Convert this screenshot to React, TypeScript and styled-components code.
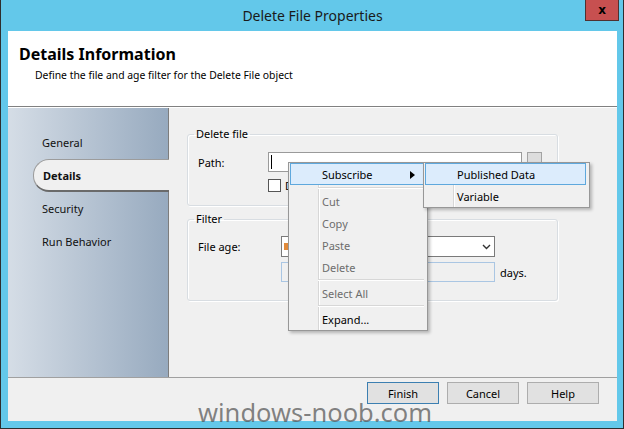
import React from 'react';
import styled, { createGlobalStyle } from 'styled-components';

const GlobalStyle = createGlobalStyle`
  html, body {
    margin: 0;
    padding: 0;
    overflow: hidden;
    background: #ffffff;
  }
`;

const Window = styled.div`
  position: relative;
  width: 624px;
  height: 429px;
  box-sizing: border-box;
  background: #63c8ea;
  border: 1px solid #2e2e2e;
  border-top: none;
  padding: 0 6px 7px 7px;
  display: flex;
  flex-direction: column;
  font-family: "Noto Sans", "Open Sans", sans-serif;
  font-size: 11px;
  color: #1a1a1a;
`;

const TitleBar = styled.div`
  height: 31px;
  display: grid;
  grid-template-columns: 1fr auto 1fr;
  align-items: start;
`;

const Title = styled.div`
  grid-column: 2;
  line-height: 31px;
  font-size: 14px;
  color: #1a1a1a;
`;

const CloseButton = styled.div`
  grid-column: 3;
  justify-self: end;
  margin-right: -2px;
  width: 34px;
  height: 21px;
  box-sizing: border-box;
  background: #c75050;
  border: 1px solid #4f3131;
  border-top: none;
  display: flex;
  align-items: center;
  justify-content: center;
  font-family: "DejaVu Sans", sans-serif;
  font-weight: bold;
  font-size: 12px;
  line-height: 1;
  color: #000;
`;

const Client = styled.div`
  flex: 1;
  background: #ffffff;
  display: flex;
  flex-direction: column;
`;

const Header = styled.div`
  height: 76px;
  box-sizing: border-box;
  border-bottom: 1px solid #808080;
  padding: 12px 0 0 11px;
`;

const HeaderTitle = styled.div`
  font-size: 16px;
  font-weight: bold;
  line-height: 22px;
  color: #000;
`;

const HeaderText = styled.div`
  margin: 0 0 0 16px;
  font-size: 10.4px;
  line-height: 20px;
  color: #000;
`;

const Body = styled.div`
  height: 269px;
  display: flex;
  margin-top: 1px;
  border-bottom: 1px solid #a0a0a0;
`;

const Sidebar = styled.div`
  width: 160px;
  border-right: 1px solid #7d7d7d;
  background: linear-gradient(to right, #d5dde6, #97aabf);
  padding-top: 18px;
  display: flex;
  flex-direction: column;
`;

const NavItem = styled.div<{ $active?: boolean }>`
  height: 33px;
  box-sizing: border-box;
  display: flex;
  align-items: center;
  font-size: 11px;
  color: #111;
  padding-left: 34px;
  ${p => p.$active && `
    margin-left: 25px;
    margin-right: -1px;
    padding-left: 9px;
    background: #f0f0f0;
    font-weight: bold;
    border: 1px solid #9c9c9c;
    border-right: none;
    border-bottom: 2px solid #6a6a6a;
    border-radius: 16px 0 0 16px;
  `}
`;

const Content = styled.div`
  flex: 1;
  background: #f0f0f0;
  padding: 18px 0 0 18px;
  display: flex;
  flex-direction: column;
  gap: 5px;
`;

const Group = styled.fieldset<{ $pad: string }>`
  margin: 0;
  width: 371px;
  box-sizing: border-box;
  border: 1px solid #d8dde2;
  border-radius: 3px;
  box-shadow: inset 1px 1px 0 #ffffff, 1px 1px 0 #ffffff;
  padding: ${p => p.$pad};
  display: flex;
  flex-direction: column;
`;

const Legend = styled.legend`
  padding: 0 2px;
  margin-left: -4px;
  font-size: 11px;
  line-height: 16px;
  color: #000;
`;

const Row = styled.div<{ $label: number; $h: number }>`
  display: grid;
  grid-template-columns: ${p => p.$label}px auto auto;
  justify-content: start;
  align-items: center;
  height: ${p => p.$h}px;
  column-gap: 5px;
`;

const Label = styled.div`
  color: #000;
  white-space: nowrap;
`;

const TextBox = styled.div<{ $w: number; $disabled?: boolean }>`
  width: ${p => p.$w}px;
  height: 20px;
  box-sizing: border-box;
  border: 1px solid ${p => (p.$disabled ? '#aac6e3' : '#9a9a9a')};
  background: ${p => (p.$disabled ? '#f0f0f0' : '#ffffff')};
  display: flex;
  align-items: center;
  padding-left: 2px;
`;

const Caret = styled.span`
  width: 1px;
  height: 14px;
  background: #000;
`;

const BrowseButton = styled.div`
  width: 15px;
  height: 16px;
  box-sizing: border-box;
  align-self: start;
  background: #dddddd;
  border: 1px solid #a3a3a3;
`;

const CheckRow = styled.div`
  display: flex;
  align-items: center;
  gap: 4px;
  margin-left: 70px;
  height: 13px;
  color: #000;
`;

const CheckBox = styled.div`
  width: 13px;
  height: 13px;
  box-sizing: border-box;
  border: 1px solid #555;
  background: #fff;
`;

const Select = styled.div`
  width: 214px;
  height: 21px;
  box-sizing: border-box;
  border: 1px solid #7a7a7a;
  background: #fff;
  display: flex;
  align-items: center;
  justify-content: space-between;
  padding: 0 3px 0 2px;
`;

const SelectIcon = styled.span`
  width: 5px;
  height: 7px;
  background: #e08a3a;
`;

const Footer = styled.div`
  flex: 1;
  background: #f0f0f0;
  display: flex;
  justify-content: flex-end;
  align-items: flex-start;
  gap: 8px;
  padding: 4px 18px 0 0;
`;

const Button = styled.div<{ $default?: boolean }>`
  width: 72px;
  height: 22px;
  box-sizing: border-box;
  background: #e1e1e1;
  border: 1px solid ${p => (p.$default ? '#3c7fb1' : '#adadad')};
  display: flex;
  align-items: center;
  justify-content: center;
  font-size: 11px;
  color: #000;
`;

const Menu = styled.div<{ $left: number; $width: number }>`
  position: absolute;
  top: 162px;
  left: ${p => p.$left}px;
  width: ${p => p.$width}px;
  box-sizing: border-box;
  border: 1px solid #979797;
  background: linear-gradient(
      to right,
      transparent 29px,
      #d7d7d7 29px,
      #d7d7d7 30px,
      #ffffff 30px,
      #ffffff 31px,
      transparent 31px
    ),
    #f0f0f0;
  padding: 0 3px 0 1px;
  box-shadow: 2px 2px 3px rgba(0, 0, 0, 0.25);
  font-size: 11px;
`;

const MenuItem = styled.div<{ $hot?: boolean; $disabled?: boolean }>`
  position: relative;
  height: 22px;
  box-sizing: border-box;
  display: flex;
  align-items: center;
  padding-left: 31px;
  color: ${p => (p.$disabled ? '#6d6d6d' : '#000')};
  border: 1px solid ${p => (p.$hot ? '#5ea8dd' : 'transparent')};
  background: ${p => (p.$hot ? '#dcecfc' : 'transparent')};
`;

const Separator = styled.div<{ $h?: number }>`
  height: ${p => p.$h ?? 4}px;
  margin-left: 28px;
  display: flex;
  align-items: center;
  &::after {
    content: '';
    flex: 1;
    height: 1px;
    background: #d7d7d7;
    border-bottom: 1px solid #ffffff;
  }
`;

const Arrow = styled.svg`
  position: absolute;
  right: 8px;
  top: 7px;
`;

const Watermark = styled.div`
  position: absolute;
  left: 197px;
  top: 395px;
  font-family: "Noto Sans", sans-serif;
  font-size: 25.5px;
  line-height: 34px;
  color: rgba(85, 85, 85, 0.72);
  pointer-events: none;
`;

export default function App() {
  return (
    <>
      <GlobalStyle />
      <Window>
        <TitleBar>
          <Title>Delete File Properties</Title>
          <CloseButton>x</CloseButton>
        </TitleBar>
        <Client>
          <Header>
            <HeaderTitle>Details Information</HeaderTitle>
            <HeaderText>Define the file and age filter for the Delete File object</HeaderText>
          </Header>
          <Body>
            <Sidebar>
              <NavItem>General</NavItem>
              <NavItem $active>Details</NavItem>
              <NavItem>Security</NavItem>
              <NavItem>Run Behavior</NavItem>
            </Sidebar>
            <Content>
              <Group $pad="10px 0 13px 10px">
                <Legend>Delete file</Legend>
                <Row $label={65} $h={20}>
                  <Label>Path:</Label>
                  <TextBox $w={254}>
                    <Caret />
                  </TextBox>
                  <BrowseButton />
                </Row>
                <CheckRow style={{ marginTop: 7 }}>
                  <CheckBox />
                  <span>Delete files in subfolders</span>
                </CheckRow>
              </Group>
              <Group $pad="9px 0 18px 10px">
                <Legend>Filter</Legend>
                <Row $label={78} $h={21}>
                  <Label>File age:</Label>
                  <Select>
                    <SelectIcon />
                    <svg width="9" height="6" viewBox="0 0 9 6">
                      <path d="M1 1 L4.5 4.5 L8 1" fill="none" stroke="#333" strokeWidth="1.4" />
                    </svg>
                  </Select>
                </Row>
                <Row $label={78} $h={20} style={{ marginTop: 5 }}>
                  <span />
                  <TextBox $w={214} $disabled />
                  <Label>days.</Label>
                </Row>
              </Group>
            </Content>
          </Body>
          <Footer>
            <Button $default>Finish</Button>
            <Button>Cancel</Button>
            <Button>Help</Button>
          </Footer>
        </Client>

        <Menu $left={287} $width={140}>
          <MenuItem $hot>
            Subscribe
            <Arrow width="5" height="8" viewBox="0 0 5 8">
              <path d="M0 0 L5 4 L0 8 Z" fill="#000" />
            </Arrow>
          </MenuItem>
          <Separator $h={5} />
          <MenuItem $disabled>Cut</MenuItem>
          <MenuItem $disabled>Copy</MenuItem>
          <MenuItem $disabled>Paste</MenuItem>
          <MenuItem $disabled>Delete</MenuItem>
          <Separator />
          <MenuItem $disabled>Select All</MenuItem>
          <Separator />
          <MenuItem>Expand...</MenuItem>
        </Menu>

        <Menu $left={422} $width={167}>
          <MenuItem $hot>Published Data</MenuItem>
          <MenuItem>Variable</MenuItem>
        </Menu>

        <Watermark>windows-noob.com</Watermark>
      </Window>
    </>
  );
}
